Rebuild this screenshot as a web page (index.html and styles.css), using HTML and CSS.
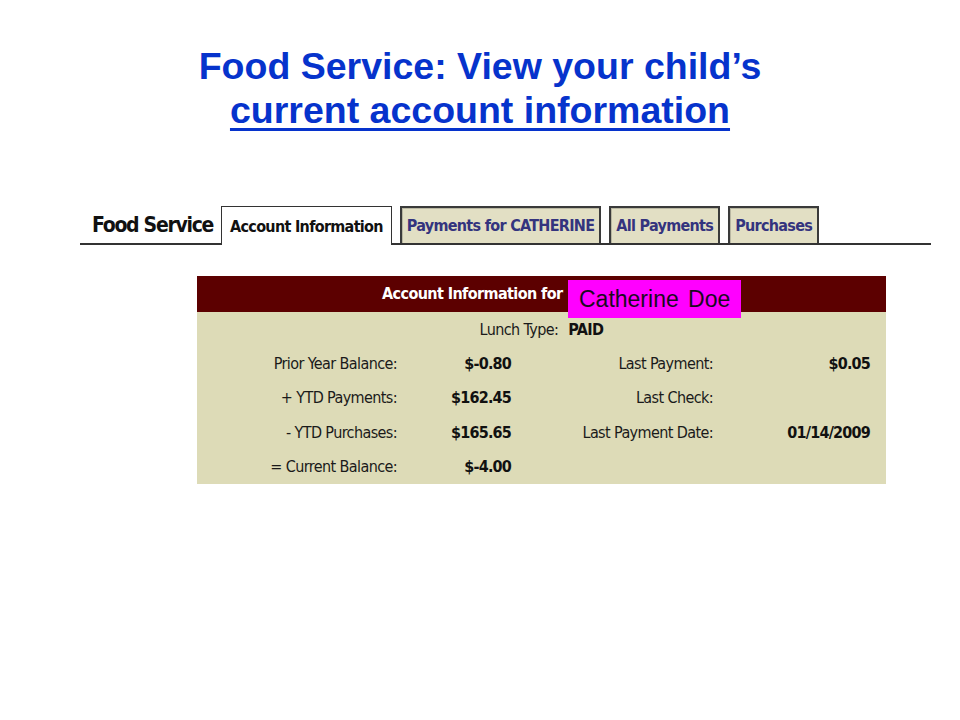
FILE: index.html
```html
<!DOCTYPE html>
<html lang="en">
<head>
  <meta charset="UTF-8" />
  <title>Food Service: View your child's current account information</title>
  <link rel="stylesheet" href="styles.css">
</head>
<body>

  <h1 class="title">Food Service: View your child’s<br><span class="title-link">current account information</span></h1>

  <nav class="tabs">
    <span class="tabs-label">Food Service</span>
    <span class="tab active">Account Information</span>
    <span class="tab">Payments for CATHERINE</span>
    <span class="tab">All Payments</span>
    <span class="tab">Purchases</span>
  </nav>

  <section class="account">
    <div class="account-head">
      <span class="head-text">Account Information for</span>
      <span class="name-tag">Catherine Doe</span>
    </div>
    <div class="account-body">
      <div class="lunch">Lunch Type: <b>PAID</b></div>

      <span class="lbl">Prior Year Balance:</span>
      <span class="val">$-0.80</span>
      <span class="lbl">Last Payment:</span>
      <span class="val">$0.05</span>

      <span class="lbl">+ YTD Payments:</span>
      <span class="val">$162.45</span>
      <span class="lbl">Last Check:</span>
      <span class="val"></span>

      <span class="lbl">- YTD Purchases:</span>
      <span class="val">$165.65</span>
      <span class="lbl">Last Payment Date:</span>
      <span class="val">01/14/2009</span>

      <span class="lbl">= Current Balance:</span>
      <span class="val">$-4.00</span>
      <span class="lbl"></span>
      <span class="val"></span>
    </div>
  </section>

</body>
</html>
```

FILE: styles.css
```css
* {
  box-sizing: border-box;
}
html, body {
  margin: 0;
  padding: 0;
  background: #fff;
}
body {
  font-family: "DejaVu Sans Condensed", "DejaVu Sans", sans-serif;
  font-stretch: condensed;
  color: #1a1a1a;
}

/* Slide title */
.title {
  margin: 44px 0 0 0;
  font-family: "Liberation Sans", Arial, sans-serif;
  font-stretch: normal;
  font-size: 37.5px;
  line-height: 44px;
  font-weight: 700;
  text-align: center;
  color: #0633cc;
}
.title-link {
  text-decoration: underline;
  text-decoration-thickness: 3px;
  text-underline-offset: 5px;
}

/* Tab strip */
.tabs {
  display: flex;
  align-items: flex-end;
  gap: 8px;
  margin: 74px 29px 0 80px;
  padding-left: 12px;
  border-bottom: 2px solid #333;
  height: 39px;
  white-space: nowrap;
}
.tabs-label {
  font-size: 21px;
  font-weight: 700;
  letter-spacing: -1.3px;
  color: #111;
  padding-bottom: 6px;
}
.tab {
  display: flex;
  align-items: center;
  justify-content: center;
  height: 37px;
  padding: 0 5px;
  font-size: 16px;
  font-weight: 700;
  letter-spacing: -0.7px;
  color: #34347e;
  background: #e2dfc4;
  border: 2px solid #3a3a3a;
  border-bottom: none;
  box-shadow: inset 1px 1px 0 #b9b7a2;
}
.tab.active {
  height: 39px;
  margin-bottom: -2px;
  background: #fff;
  color: #111;
  border: 1px solid #333;
  border-bottom: none;
  box-shadow: none;
  padding: 0 8px;
}

/* Account table */
.account {
  position: relative;
  width: 689px;
  margin: 31px 0 0 197px;
}
.account-head {
  height: 36px;
  line-height: 36px;
  padding-left: 185px;
  background: #5c0000;
  color: #fff;
  font-size: 16px;
  font-weight: 700;
  letter-spacing: -0.6px;
}
.name-tag {
  position: absolute;
  left: 371px;
  top: 4px;
  width: 173px;
  height: 38px;
  padding-left: 11px;
  line-height: 38px;
  background: #ff00ff;
  color: #1a0a1e;
  font-family: "Liberation Sans", Arial, sans-serif;
  font-stretch: normal;
  font-size: 23px;
  font-weight: 400;
  letter-spacing: 0;
  word-spacing: 3px;
}
.account-body {
  display: grid;
  grid-template-columns: 200px 114px 202px 1fr;
  grid-auto-rows: 34.4px;
  align-items: center;
  padding-right: 16px;
  background: #dddbb7;
  font-size: 16px;
  letter-spacing: -0.6px;
}
.lunch {
  grid-column: 1 / -1;
  padding-left: 16px;
  text-align: center;
}
.lunch b {
  margin-left: 6px;
  color: #111;
}
.lbl {
  text-align: right;
}
.val {
  text-align: right;
  font-weight: 700;
  letter-spacing: -0.8px;
  color: #111;
}
```
